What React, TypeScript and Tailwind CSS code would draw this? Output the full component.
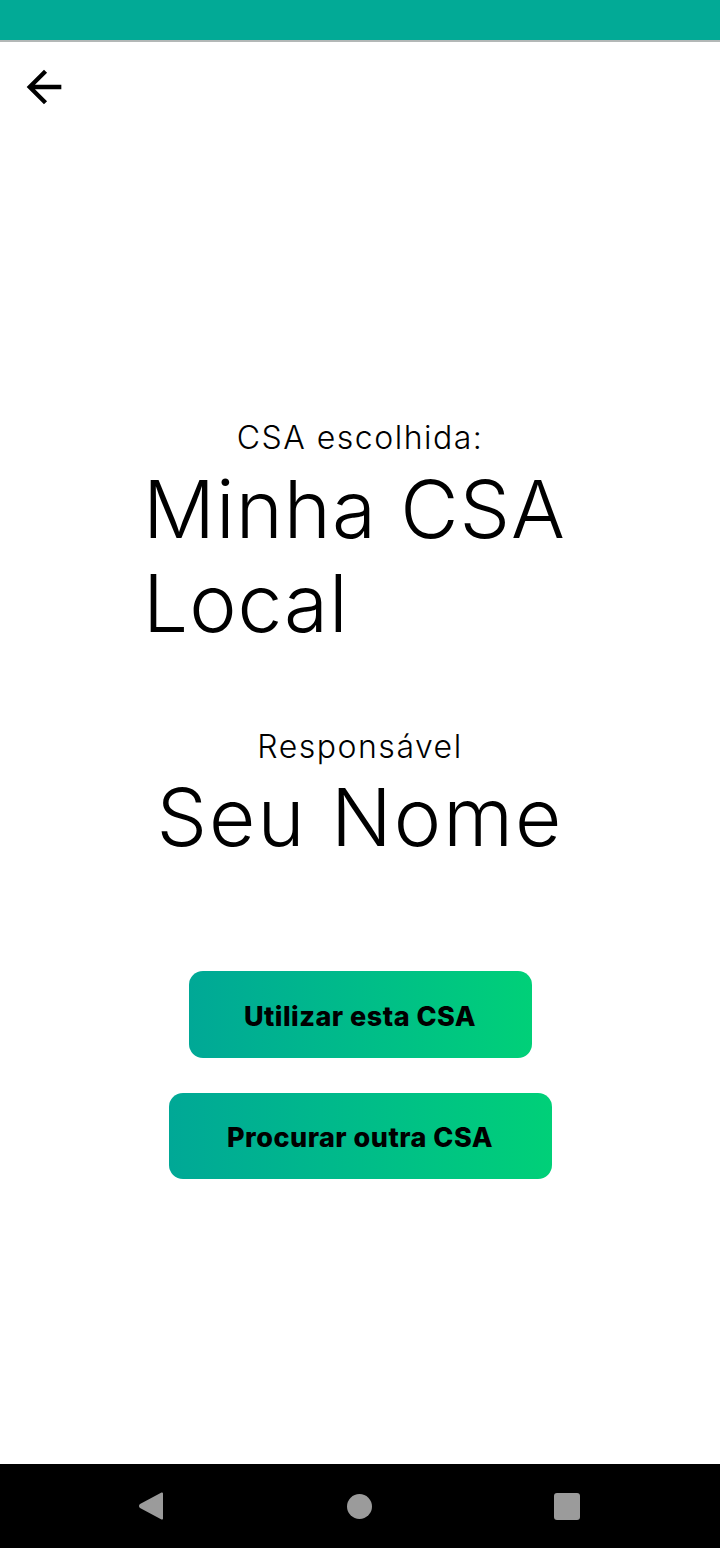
export default function App() {
  const font = { fontFamily: "Inter, 'Open Sans', sans-serif" };
  return (
    <div className="w-[720px] h-[1548px] flex flex-col bg-white text-black" style={font}>
      <div className="h-[40px] bg-[#02aa96] shrink-0" />
      <div className="h-[2px] bg-[#b3b8b7] shrink-0" />

      <main className="flex-1 flex flex-col">
        <button className="ml-[18px] mt-[19px] w-[52px] h-[52px]" aria-label="Voltar">
          <svg viewBox="0 0 24 24" className="w-[52px] h-[52px]" fill="#000">
            <path d="M20 11H7.83l5.59-5.59L12 4l-8 8 8 8 1.41-1.41L7.83 13H20v-2z" />
          </svg>
        </button>

        <div className="mt-[305px] flex flex-col items-center">
          <p className="text-[32px] leading-[40px] font-light tracking-[1.5px]">CSA escolhida:</p>
          <h1 className="mt-[4px] w-[434px] text-[80px] leading-[94px] font-light tracking-[1px] text-left">
            Minha CSA Local
          </h1>
          <p className="mt-[77px] text-[32px] leading-[40px] font-light tracking-[1.5px]">Responsável</p>
          <h2 className="mt-[3px] text-[80px] leading-[94px] font-light tracking-[2px]">Seu Nome</h2>
        </div>

        <div className="mt-[107px] flex flex-col items-center gap-[35px]">
          <button className="w-[343px] h-[87px] pt-[5px] rounded-[14px] bg-gradient-to-r from-[#00a896] to-[#00d078] text-[27px] font-extrabold tracking-[0.5px]">
            Utilizar esta CSA
          </button>
          <button className="w-[383px] h-[86px] pt-[5px] rounded-[14px] bg-gradient-to-r from-[#00a896] to-[#00d078] text-[27px] font-extrabold tracking-[0.5px]">
            Procurar outra CSA
          </button>
        </div>
      </main>

      <nav className="h-[84px] bg-black shrink-0 flex items-center justify-between pl-[138px] pr-[140px]">
        <svg viewBox="0 0 26 28" className="w-[26px] h-[28px]">
          <path d="M24 1.5 L2.5 13 Q1.5 14 2.5 15 L24 26.5 Z" fill="#9b9b9b" stroke="#9b9b9b" strokeLinejoin="round" strokeWidth="2" />
        </svg>
        <div className="w-[25px] h-[25px] rounded-full bg-[#9b9b9b]" />
        <div className="w-[26px] h-[27px] rounded-[3px] bg-[#9b9b9b]" />
      </nav>
    </div>
  );
}
